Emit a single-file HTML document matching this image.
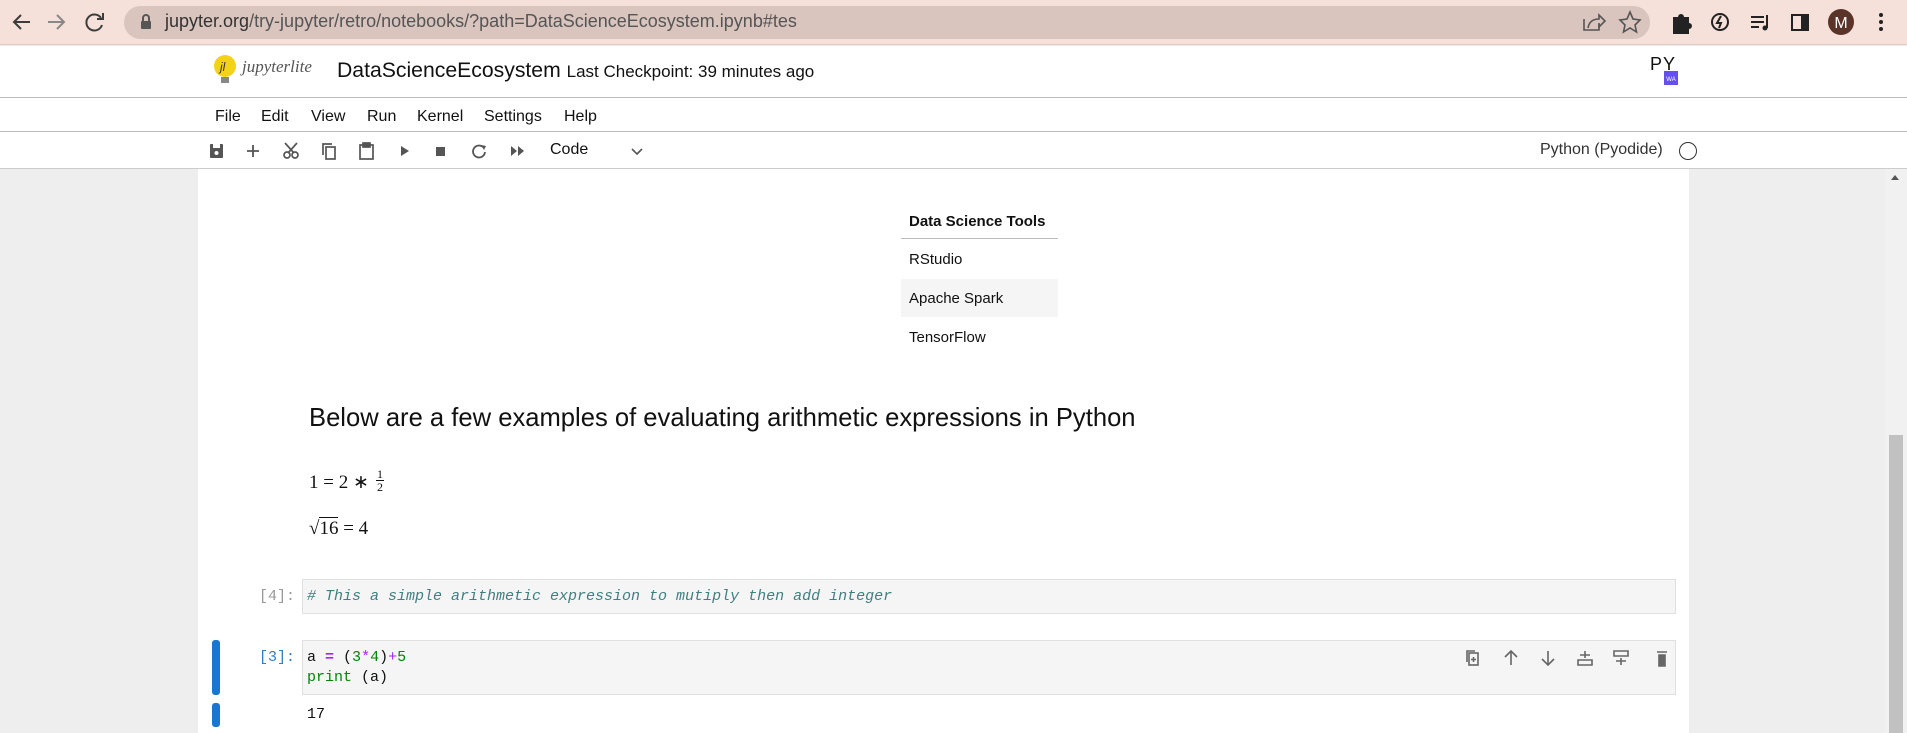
<!DOCTYPE html>
<html><head><meta charset="utf-8"><style>
*{margin:0;padding:0;box-sizing:border-box}
body{width:1907px;height:733px;overflow:hidden;background:#eee;font-family:"Liberation Sans",sans-serif;position:relative;color:#000}
.abs{position:absolute}
.mono{font-family:"Liberation Mono",monospace}
.m{position:absolute;top:108px;font-size:16px;color:#111}
</style></head><body>
<div class="abs" style="left:0;top:0;width:1907px;height:45px;background:#f6e0da;border-bottom:1px solid #e0c8c0"></div>
<div class="abs" style="left:124px;top:6px;width:1526px;height:33px;background:#d9c4be;border-radius:17px"></div>
<svg class="abs" style="left:0;top:0" width="1907" height="45">
<g stroke="#3c3c3c" stroke-width="2" fill="none">
<path d="M30 22H14M21 15l-7 7 7 7"/>
<path d="M48 22h16M57 15l7 7-7 7" stroke="#888"/>
<path d="M101 18a8 8 0 1 0 1 7"/><path d="M103 13v6h-6"/>
</g>
<rect x="141" y="21" width="10" height="8" rx="1" fill="#555"/><path d="M143 21v-3a3 3 0 0 1 6 0v3" stroke="#555" stroke-width="2" fill="none"/>
<g stroke="#555" stroke-width="1.6" fill="none"><path d="M1584 19v11h15v-6"/><path d="M1588 28c1-6 5-9 11-9v-4l6 6-6 6v-4"/></g>
<path d="M1630 12l3 7 7 1-5 5 1.5 7-6.5-4-6.5 4 1.5-7-5-5 7-1z" stroke="#555" stroke-width="1.6" fill="none"/>
<path d="M1673 17h5a3 3 0 0 1 6 0h5v6a3 3 0 0 1 0 6v5h-16z" fill="#222"/>
<circle cx="1720" cy="22" r="8" stroke="#222" stroke-width="2" fill="none"/><path d="M1721 16l-4 7h4l-2 5" stroke="#222" stroke-width="2" fill="none"/>
<g stroke="#222" stroke-width="2"><path d="M1751 17h13M1751 22h13M1751 27h8"/><path d="M1767 15v13"/></g><circle cx="1765" cy="28" r="2.5" fill="#222"/>
<rect x="1792" y="15" width="16" height="15" stroke="#222" stroke-width="2" fill="none"/><rect x="1801" y="15" width="7" height="15" fill="#222"/>
<circle cx="1841" cy="22" r="13" fill="#5a3428"/><text x="1841" y="28" fill="#fff" font-size="16" text-anchor="middle" font-family="Liberation Sans">M</text>
<g fill="#222"><circle cx="1881" cy="15" r="2"/><circle cx="1881" cy="22" r="2"/><circle cx="1881" cy="29" r="2"/></g>
</svg>
<div class="abs" style="left:165px;top:11px;font-size:18px;color:#333">jupyter.org<span style="color:#555">/try-jupyter/retro/notebooks/?path=DataScienceEcosystem.ipynb#tes</span></div>
<div class="abs" style="left:0;top:46px;width:1907px;height:122px;background:#fff"></div>
<div class="abs" style="left:0;top:97px;width:1907px;height:1px;background:#bbb"></div>
<div class="abs" style="left:0;top:131px;width:1907px;height:1px;background:#bbb"></div>
<div class="abs" style="left:0;top:168px;width:1907px;height:1px;background:#ccc"></div>
<svg class="abs" style="left:212px;top:52px" width="110" height="36">
<circle cx="13" cy="14" r="11" fill="#f5d21a"/><rect x="9" y="25" width="8" height="6" fill="#888"/>
<text x="8" y="19" font-size="12" font-style="italic" fill="#333">jl</text>
<text x="30" y="20" font-size="17" font-style="italic" font-family="Liberation Serif" fill="#555">jupyterlite</text>
</svg>
<div class="abs" style="left:337px;top:59px;font-size:21.2px;color:#111">DataScienceEcosystem <span style="font-size:17px">Last Checkpoint: 39 minutes ago</span></div>
<div class="abs" style="left:1650px;top:54px;font-size:18px;letter-spacing:1px;color:#111">PY</div>
<div class="abs" style="left:1664px;top:71px;width:14px;height:14px;background:#654ff0;color:#fff;font-size:6px;text-align:center;line-height:18px">WA</div>
<span class="m" style="left:215px">File</span><span class="m" style="left:261px">Edit</span><span class="m" style="left:311px">View</span><span class="m" style="left:367px">Run</span><span class="m" style="left:417px">Kernel</span><span class="m" style="left:484px">Settings</span><span class="m" style="left:564px">Help</span>
<svg class="abs" style="left:205px;top:138px" width="440" height="26" fill="#555" stroke="#555">
<rect x="5" y="6" width="13" height="14" rx="1" stroke="none"/><rect x="8" y="6" width="7" height="4" fill="#fff" stroke="none"/><circle cx="11.5" cy="15" r="2" fill="#fff" stroke="none"/>
<path d="M48 7v12M42 13h12" stroke-width="1.8" fill="none"/>
<g fill="none" stroke-width="1.7"><circle cx="82" cy="17" r="3"/><circle cx="90" cy="17" r="3"/><path d="M83 15l9-10M89 15l-9-10"/></g>
<g fill="none" stroke-width="1.7"><rect x="121" y="9" width="9" height="12"/><path d="M118 17V6h9"/></g>
<g fill="none" stroke-width="1.7"><rect x="155" y="7" width="13" height="14"/><rect x="158" y="5" width="7" height="4" fill="#555"/></g>
<path d="M196 8l8 5-8 5z" stroke="none"/>
<rect x="231" y="9" width="9" height="9" stroke="none"/>
<g fill="none" stroke-width="1.8"><path d="M278 9a6 6 0 1 0 2 5"/></g><path d="M276 7l5 1-2 4z" stroke="none"/>
<path d="M306 8l6 5-6 5zM313 8l6 5-6 5z" stroke="none"/>
<path d="M427 11l5 5 5-5" fill="none" stroke-width="1.6"/>
</svg>
<div class="abs" style="left:550px;top:141px;font-size:16px;color:#111">Code</div>
<div class="abs" style="left:1540px;top:141px;font-size:16px;color:#333">Python (Pyodide)</div>
<div class="abs" style="left:1679px;top:142px;width:18px;height:18px;border:1.6px solid #333;border-radius:50%"></div>
<div class="abs" style="left:198px;top:169px;width:1491px;height:564px;background:#fff"></div>
<div class="abs" style="left:1885px;top:169px;width:22px;height:564px;background:#f1f1f1"></div>
<div class="abs" style="left:1889px;top:435px;width:14px;height:298px;background:#c1c1c1"></div>
<div class="abs" style="left:1891px;top:175px;width:0;height:0;border-left:4px solid transparent;border-right:4px solid transparent;border-bottom:5px solid #555"></div>
<div class="abs" style="left:901px;top:211px;width:157px;height:28px;border-bottom:1px solid #bbb;font-size:15px;font-weight:bold;padding:2px 0 0 8px;color:#111">Data Science Tools</div>
<div class="abs" style="left:901px;top:251px;font-size:15px;padding-left:8px;color:#111">RStudio</div>
<div class="abs" style="left:901px;top:279px;width:157px;height:38px;background:#f5f5f5;font-size:15px;padding:11px 0 0 8px;color:#111">Apache Spark</div>
<div class="abs" style="left:901px;top:329px;font-size:15px;padding-left:8px;color:#111">TensorFlow</div>
<div class="abs" style="left:309px;top:404px;font-size:25.6px;color:#111">Below are a few examples of evaluating arithmetic expressions in Python</div>
<div class="abs" style="left:309px;top:471px;font-family:'Liberation Serif',serif;font-size:19px;color:#111">1 = 2 ∗ </div>
<div class="abs" style="left:376px;top:468px;font-family:'Liberation Serif',serif;font-size:12px;line-height:12px;text-align:center;color:#111"><div style="border-bottom:1px solid #111;padding:0 1px">1</div><div>2</div></div>
<div class="abs" style="left:309px;top:518px;font-family:'Liberation Serif',serif;font-size:19px;color:#111">√<span style="border-top:1.5px solid #111">16</span> = 4</div>
<div class="abs mono" style="left:259px;top:588px;font-size:15px;color:#999">[4]:</div>
<div class="abs" style="left:302px;top:579px;width:1374px;height:35px;background:#f5f5f5;border:1px solid #e0e0e0"></div>
<div class="abs mono" style="left:307px;top:588px;font-size:15px;color:#408080;font-style:italic"># This a simple arithmetic expression to mutiply then add integer</div>
<div class="abs" style="left:212px;top:640px;width:8px;height:55px;background:#1976d2;border-radius:3px"></div>
<div class="abs mono" style="left:259px;top:649px;font-size:15px;color:#307fc1">[3]:</div>
<div class="abs" style="left:302px;top:640px;width:1374px;height:55px;background:#f5f5f5;border:1px solid #e0e0e0"></div>
<div class="abs mono" style="left:307px;top:648px;font-size:15px;line-height:20px;color:#111">a <span style="color:#a2f;font-weight:bold">=</span> (<span style="color:#080">3</span><span style="color:#a2f">*</span><span style="color:#080">4</span>)<span style="color:#a2f">+</span><span style="color:#080">5</span><br><span style="color:#080">print</span> (a)</div>
<svg class="abs" style="left:1462px;top:647px" width="210" height="22" stroke="#666" fill="none" stroke-width="1.6">
<rect x="7" y="6" width="9" height="12"/><path d="M5 15V4h8M11.5 10v5M9 12.5h5"/>
<path d="M49 4v14M43 10l6-6 6 6"/>
<path d="M86 4v14M80 12l6 6 6-6"/>
<path d="M123 4v7M118 8h10M116 13h14v5h-14z"/>
<path d="M152 4h14v5h-14zM159 11v7M154 14h10"/>
<path d="M195 5h10M197 8h6v11h-6z" fill="#666"/>
</svg>
<div class="abs" style="left:212px;top:703px;width:8px;height:24px;background:#1976d2;border-radius:3px"></div>
<div class="abs mono" style="left:307px;top:706px;font-size:15px;color:#111">17</div>
</body></html>
